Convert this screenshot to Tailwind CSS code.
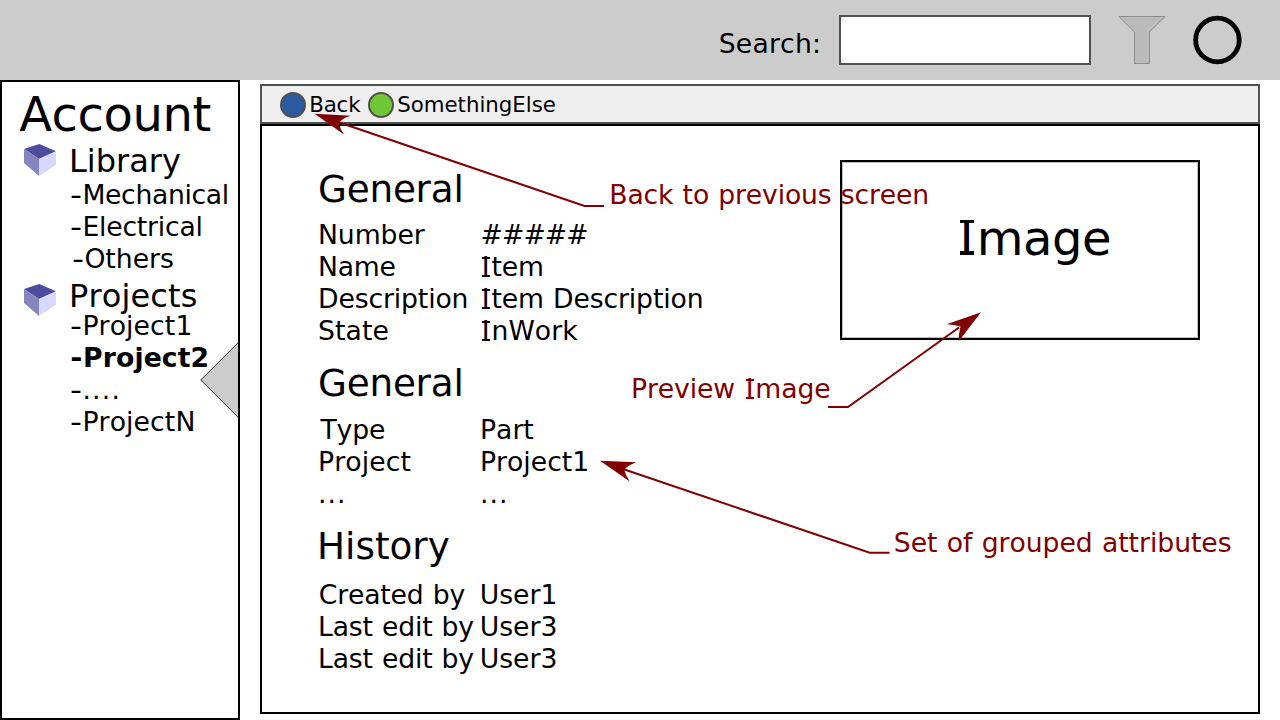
<!DOCTYPE html>
<html lang="en">
<head>
<meta charset="utf-8">
<title>Item details</title>
<script src="https://cdn.jsdelivr.net/npm/@tailwindcss/browser@4"></script>
</head>
<body class="relative h-[720px] w-[1280px] overflow-hidden bg-white font-['Verdana','DejaVu_Sans',sans-serif] text-[26.67px] leading-8 text-black whitespace-nowrap [font-kerning:none] [word-spacing:.034em]">

<header class="flex h-20 items-center bg-[#cccccc] pl-[718.7px]">
  <label class="mt-[7px] w-[120.3px] tracking-[.007em]">Search:</label>
  <div class="h-[50px] w-[252px] border-2 border-[#505050] bg-white"></div>
  <svg class="ml-[27px] h-[50px] w-[48px]" viewBox="0 0 48 50"><path d="M.8 1.5H47L31.5 17V48.5H16.5V17Z" fill="#bbbbbb" stroke="#8c8c8c"/></svg>
  <svg class="ml-[26px] h-[50px] w-[50px]" viewBox="0 0 50 50"><circle cx="25.4" cy="25" r="21.8" fill="none" stroke="#000" stroke-width="4.8"/></svg>
</header>

<div class="flex h-[640px]">
  <aside class="relative w-60 border-2 border-black pt-1">
    <h1 class="pl-[17.2px] text-[48px] leading-[56px] tracking-[-.009em]">Account</h1>
    <section>
      <div class="flex h-[37px] pl-[22px]">
        <svg class="mt-0.5 h-8 w-8" viewBox="0 0 32 32"><path d="M15.3 0L32 7.3 15 15 0 5Z" fill="#4d4d9f"/><path d="M0 5L15 15V32L0 19Z" fill="#8686bf"/><path d="M15 15L32 7.3V20.7L15 32Z" fill="#d7d7ff"/></svg>
        <h2 class="ml-[13px] mt-px text-[32px] leading-[36px]">Library</h2>
      </div>
      <ul class="pl-[68.3px]">
        <li class="tracking-[-.013em]"><span class="inline-block w-[.454em] scale-x-125 text-center tracking-normal">-</span>Mechanical</li>
        <li class="tracking-[-.008em]"><span class="inline-block w-[.454em] scale-x-125 text-center tracking-normal">-</span>Electrical</li>
        <li class="pl-[2px]"><span class="inline-block w-[.454em] scale-x-125 text-center tracking-normal">-</span>Others</li>
      </ul>
    </section>
    <section class="pt-[2px]">
      <div class="flex h-[33px] pl-[22px]">
        <svg class="mt-[7px] h-8 w-8" viewBox="0 0 32 32"><path d="M15.3 0L32 7.3 15 15 0 5Z" fill="#4d4d9f"/><path d="M0 5L15 15V32L0 19Z" fill="#8686bf"/><path d="M15 15L32 7.3V20.7L15 32Z" fill="#d7d7ff"/></svg>
        <h2 class="ml-[13px] mt-[5px] text-[32px] leading-[28px] tracking-[.004em]">Projects</h2>
      </div>
      <ul class="pl-[68.3px] tracking-[.004em]">
        <li><span class="inline-block w-[.454em] scale-x-125 text-center tracking-normal">-</span>Project1</li>
        <li class="font-bold"><span class="inline-block w-[.48em] scale-x-110 text-center tracking-normal">-</span>Project2</li>
        <li class="tracking-[.046em]"><span class="inline-block w-[.454em] scale-x-125 text-center tracking-normal">-</span>....</li>
        <li><span class="inline-block w-[.454em] scale-x-125 text-center tracking-normal">-</span>ProjectN</li>
      </ul>
    </section>
    <svg class="absolute top-[258px] right-[-2px] h-[80px] w-10" viewBox="0 0 40 80"><path d="M39 1.800L.8 40 39 78.2Z" fill="#cccccc" stroke="#222"/><path d="M39 0V80" stroke="#000" stroke-width="2"/></svg>
  </aside>

  <main class="ml-5 flex w-[1000px] flex-col pt-1">
    <nav class="flex h-10 items-center border-2 border-[#505050] bg-[#efefef] pl-[18px] text-[21.33px]">
      <div class="mt-[2px] size-[26px] rounded-full border-2 border-[#505050] bg-[#2c5aa0]"></div>
      <span class="ml-[3.2px] mt-[2px] w-[58.8px] tracking-[-.007em]">Back</span>
      <div class="mt-[2px] size-[26px] rounded-full border-2 border-[#505050] bg-[#71c837]"></div>
      <span class="ml-[3.2px] mt-[2px] tracking-[-.001em]">SomethingElse</span>
    </nav>

    <div class="flex h-[590px] border-2 border-black">
      <div class="w-[578px] pt-[41px] pl-[56px]">
        <h2 class="text-[37.33px] leading-[44px] tracking-[-.006em]">General</h2>
        <dl class="mt-2 grid grid-cols-[162.2px_1fr]">
          <dt class="tracking-[-.003em]">Number</dt><dd class="pl-[.3px] tracking-[-.033em]">#####</dd>
          <dt class="tracking-[-.008em]">Name</dt><dd class="tracking-[-.004em]"><span class="relative inline-block w-[.421em] text-center leading-[1em] tracking-normal before:absolute before:top-[.117em] before:left-[.066em] before:h-[.075em] before:w-[.289em] before:bg-current after:absolute after:top-[.771em] after:left-[.066em] after:h-[.075em] after:w-[.289em] after:bg-current">I</span>tem</dd>
          <dt class="tracking-[-.005em]">Description</dt><dd class="tracking-[-.005em]"><span class="relative inline-block w-[.421em] text-center leading-[1em] tracking-normal before:absolute before:top-[.117em] before:left-[.066em] before:h-[.075em] before:w-[.289em] before:bg-current after:absolute after:top-[.771em] after:left-[.066em] after:h-[.075em] after:w-[.289em] after:bg-current">I</span>tem Description</dd>
          <dt class="tracking-[.004em]">State</dt><dd class="tracking-[.004em]"><span class="relative inline-block w-[.421em] text-center leading-[1em] tracking-normal before:absolute before:top-[.117em] before:left-[.066em] before:h-[.075em] before:w-[.289em] before:bg-current after:absolute after:top-[.771em] after:left-[.066em] after:h-[.075em] after:w-[.289em] after:bg-current">I</span>nWork</dd>
        </dl>
        <h2 class="mt-[14px] text-[37.33px] leading-[44px] tracking-[-.006em]">General</h2>
        <dl class="mt-[9px] grid grid-cols-[162px_1fr]">
          <dt class="pl-[2.5px] tracking-[-.006em]">Type</dt><dd>Part</dd>
          <dt class="tracking-[.004em]">Project</dt><dd>Project1</dd>
          <dt class="tracking-[.04em]">...</dt><dd class="tracking-[.04em]">...</dd>
        </dl>
        <h2 class="-ml-px mt-[14px] text-[37.33px] leading-[44px]">History</h2>
        <dl class="mt-[11px] grid grid-cols-[161.7px_1fr]">
          <dt class="pl-[.8px] tracking-[-.007em]">Created by</dt><dd>User1</dd>
          <dt class="tracking-[-.007em]">Last edit by</dt><dd>User3</dd>
          <dt class="tracking-[-.007em]">Last edit by</dt><dd>User3</dd>
        </dl>
      </div>
      <figure class="mt-[34px] h-[180px] w-[360px] border-2 border-black pt-12 pl-[114.500px] text-[48px] leading-[56px] tracking-[-.009em] shadow-[inset_0_0_0_1px_#00000040]"><span class="relative inline-block w-[.421em] text-center leading-[1em] tracking-normal before:absolute before:top-[.117em] before:left-[.066em] before:h-[.075em] before:w-[.289em] before:bg-current after:absolute after:top-[.771em] after:left-[.066em] after:h-[.075em] after:w-[.289em] after:bg-current">I</span>mage</figure>
    </div>
  </main>
</div>

<!-- Annotation layer -->
<div class="pointer-events-none absolute inset-0 text-[#800000]">
  <svg class="absolute inset-0 h-[720px] w-[1280px]" viewBox="0 0 1280 720" fill="none" stroke="#800000" stroke-width="2">
    <path d="M338 122L584.5 206H604M959 327.500L848 407H828M623 469L869.700 552.700H889.500"/>
    <g fill="#800000" stroke="none">
      <path d="M314.500 113.800L350.700 115.700Q343 118 338.700 122.500Q340 129 344 134.500Z"/>
      <path d="M981 312.300L946.700 324.300Q954 324.500 960.500 326.500Q958.500 334 958.700 341.200Z"/>
      <path d="M600 460.700L636 462.300Q629 465 624 469.300Q625.500 475.500 629.700 481.500Z"/>
    </g>
  </svg>
  <span class="absolute top-[179px] left-[609.3px] tracking-[-.006em]">Back to previous screen</span>
  <span class="absolute top-[373px] left-[631px] tracking-[-.005em]">Preview <span class="relative inline-block w-[.421em] text-center leading-[1em] tracking-normal before:absolute before:top-[.117em] before:left-[.066em] before:h-[.075em] before:w-[.289em] before:bg-current after:absolute after:top-[.771em] after:left-[.066em] after:h-[.075em] after:w-[.289em] after:bg-current">I</span>mage</span>
  <span class="absolute top-[527px] left-[893.8px] tracking-[-.002em]">Set of grouped attributes</span>
</div>
</body>
</html>
